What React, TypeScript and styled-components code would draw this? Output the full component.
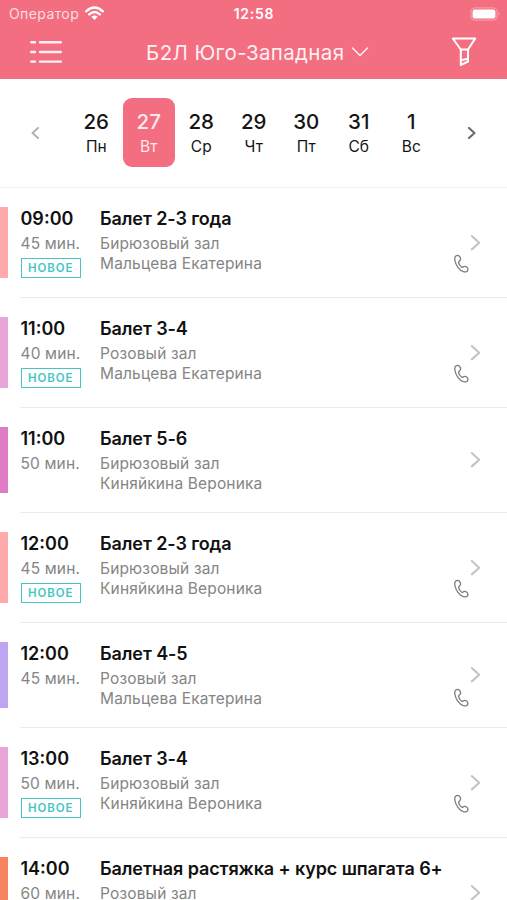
import React from "react";
import styled, { createGlobalStyle } from "styled-components";

const GlobalStyle = createGlobalStyle`
  * { box-sizing: border-box; }
  html, body { margin: 0; background: #fff; }
  body { font-family: Inter, "Noto Sans", sans-serif; color: #111; overflow: hidden; }
`;

const Screen = styled.div`
  width: 507px;
  height: 900px;
  overflow: hidden;
  background: #fff;
`;

const Header = styled.header`
  height: 79px;
  background: #f26e80;
  color: #fff;
`;

const StatusBar = styled.div`
  height: 27px;
  display: grid;
  grid-template-columns: 1fr auto 1fr;
  align-items: center;
  padding: 0 6px 0 9px;
`;

const Carrier = styled.div`
  display: flex;
  align-items: center;
  gap: 6px;
  font-size: 14px;
  letter-spacing: 0.4px;
  color: #fddde1;
`;

const Clock = styled.div`
  font-size: 14px;
  font-weight: 600;
  letter-spacing: 0.75px;
  margin-right: 2px;
`;

const BatterySlot = styled.div`
  display: flex;
  justify-content: flex-end;
`;

const NavBar = styled.div`
  height: 50px;
  display: grid;
  grid-template-columns: 60px 1fr 60px;
  align-items: center;
  padding: 0 13px 0 16px;
`;

const NavIcon = styled.div`
  display: flex;
  justify-content: center;
`;

const Club = styled.div`
  display: flex;
  justify-content: center;
  align-items: center;
  gap: 7px;
  font-size: 20.5px;
  letter-spacing: 0.36px;
  padding-left: 5.5px;
  color: #fff0f2;
  white-space: nowrap;
`;

const Week = styled.section`
  height: 109px;
  display: flex;
  align-items: center;
  padding: 0 0 1px 0.5px;
  border-bottom: 1px solid #efefef;
`;

const Arrow = styled.div`
  width: 70px;
  display: flex;
  justify-content: center;
`;

const Days = styled.div`
  display: flex;
`;

const Day = styled.div<{ $active?: boolean }>`
  width: 52.5px;
  height: 69px;
  padding-top: 11px;
  border-radius: 9px;
  text-align: center;
  background: ${(p) => (p.$active ? "#f26e80" : "transparent")};
  color: ${(p) => (p.$active ? "#ffe9ec" : "#151515")};
`;

const DayNumber = styled.div`
  font-size: 20.5px;
  line-height: 25px;
  font-weight: 500;
`;

const DayName = styled.div`
  font-size: 15.5px;
  line-height: 26px;
`;

const Row = styled.article<{ $height: number }>`
  height: ${(p) => p.$height}px;
  display: flex;
  padding-top: 19px;
`;

const ColorBar = styled.div<{ $color: string; $height: number }>`
  width: 8px;
  height: ${(p) => p.$height}px;
  margin-right: 12px;
  background: ${(p) => p.$color};
`;

const Body = styled.div`
  flex: 1;
  display: flex;
  border-bottom: 1px solid #ebebeb;
  white-space: nowrap;
`;

const TimeColumn = styled.div`
  width: 80px;
  padding-left: 0.5px;
`;

const Info = styled.div`
  flex: 1;
`;

const Strong = styled.div<{ $spacing?: number }>`
  height: 26.5px;
  padding-top: 1px;
  font-size: 18px;
  line-height: 22px;
  font-weight: 600;
  letter-spacing: ${(p) => p.$spacing ?? 0}px;
`;

const Muted = styled.div`
  font-size: 15.5px;
  line-height: 20px;
  letter-spacing: 0.15px;
  color: #858585;
`;

const Badge = styled.div`
  width: 60.5px;
  height: 20px;
  margin-top: 4.5px;
  border: 1.5px solid #45c6c2;
  color: #45c6c2;
  font-size: 11.5px;
  line-height: 18px;
  font-weight: 600;
  letter-spacing: 0.9px;
  text-align: center;
`;

const Actions = styled.div<{ $top: number }>`
  width: 61px;
  display: flex;
  align-items: flex-start;
  padding-top: ${(p) => p.$top}px;
`;

const PhoneSlot = styled.div<{ $drop: number }>`
  width: 24px;
  padding: ${(p) => p.$drop}px 0 0 7px;
`;

const Svg = styled.svg`
  display: block;
  flex-shrink: 0;
  fill: none;
  stroke-linecap: round;
  stroke-linejoin: round;
`;

const Wifi = () => (
  <Svg width="19" height="15" viewBox="0 0 19 15" stroke="#fff" strokeWidth="2.4" strokeLinecap="butt">
    <path d="M1.2 5.3Q9.5-2.3 17.8 5.3M4.2 8.4Q9.5 3.6 14.8 8.4" />
    <path d="M6.4 10.8Q9.5 8 12.6 10.8L9.5 14Z" fill="#fff" stroke="none" />
  </Svg>
);

const Battery = () => (
  <Svg width="31" height="14" viewBox="0 0 31 14">
    <rect x="1" y="0.8" width="26" height="12.4" rx="4" stroke="#f699a6" strokeWidth="1.2" />
    <rect x="2.6" y="2.6" width="22.8" height="8.8" rx="2.2" fill="#fff" />
    <path d="M28.5 5Q31 7 28.5 9Z" fill="#f699a6" />
  </Svg>
);

const Menu = () => (
  <Svg width="34" height="26" viewBox="0 0 34 26" stroke="#fff0f2" strokeWidth="2.4">
    <path d="M2.2 3.2h3.8M11 3.2h20.8M2.2 13h3.8M11 13h20.8M2.2 22.6h3.8M11 22.6h20.8" />
  </Svg>
);

const Filter = () => (
  <Svg width="28" height="32" viewBox="0 0 28 32" stroke="#fff" strokeWidth="2">
    <path d="M2.8 2.5H25.2L18 13.5V25.5L10.8 29V13.5ZM10.8 13.5H18M11.2 24.2L17.6 22.8" />
  </Svg>
);

const Phone = () => (
  <Svg width="17" height="20" viewBox="0 0 17 20" stroke="#7d7d7d" strokeWidth="1.35">
    <path d="M3.6 1.6C1.9 2.2 1.5 4.2 1.9 6.5C2.8 11.3 6.3 16.3 10.4 17.7C12.8 18.4 14.8 17.4 14.9 15.7C14.9 13.9 13.2 12.3 11.6 12.3C10 12.3 9.9 13.9 8.8 13.2C7.5 12.3 5.8 9.8 5.6 8.3C5.5 7.1 7.6 6.9 7.6 5.1C7.6 2.8 5.8 .9 3.6 1.6Z" />
  </Svg>
);

const Chevron = () => (
  <Svg width="12" height="18" viewBox="0 0 12 18" stroke="#c4c4c4" strokeWidth="2.1" strokeLinecap="butt">
    <path d="M1.8 2L9.2 8.7L1.8 15.4" />
  </Svg>
);

const days = [
  ["26", "Пн"], ["27", "Вт"], ["28", "Ср"], ["29", "Чт"], ["30", "Пт"], ["31", "Сб"], ["1", "Вс"],
];

interface Lesson {
  time: string;
  minutes: number;
  title: string;
  hall: string;
  coach?: string;
  color: string;
  fresh?: boolean;
  phone?: boolean;
}

const masha = "Мальцева Екатерина";
const nika = "Киняйкина Вероника";

const lessons: Lesson[] = [
  { time: "09:00", minutes: 45, title: "Балет 2-3 года", hall: "Бирюзовый зал", coach: masha, color: "#ffaaac", fresh: true, phone: true },
  { time: "11:00", minutes: 40, title: "Балет 3-4", hall: "Розовый зал", coach: masha, color: "#e8a5d8", fresh: true, phone: true },
  { time: "11:00", minutes: 50, title: "Балет 5-6", hall: "Бирюзовый зал", coach: nika, color: "#e07cc3" },
  { time: "12:00", minutes: 45, title: "Балет 2-3 года", hall: "Бирюзовый зал", coach: nika, color: "#ffaaac", fresh: true, phone: true },
  { time: "12:00", minutes: 45, title: "Балет 4-5", hall: "Розовый зал", coach: masha, color: "#bda5f2", phone: true },
  { time: "13:00", minutes: 50, title: "Балет 3-4", hall: "Бирюзовый зал", coach: nika, color: "#e8a5d8", fresh: true, phone: true },
];

const lastLesson: Lesson = {
  time: "14:00", minutes: 60, title: "Балетная растяжка + курс шпагата 6+", hall: "Розовый зал", color: "#f5845f",
};

const LessonRow = ({ lesson, tall }: { lesson: Lesson; tall?: boolean }) => {
  const height = tall ? 110 : 105;
  return (
    <Row $height={height}>
      <ColorBar $color={lesson.color} $height={height - 39.5} />
      <Body>
        <TimeColumn>
          <Strong>{lesson.time}</Strong>
          <Muted>{lesson.minutes} мин.</Muted>
          {lesson.fresh && <Badge>НОВОЕ</Badge>}
        </TimeColumn>
        <Info>
          <Strong $spacing={-0.1}>{lesson.title}</Strong>
          <Muted>{lesson.hall}</Muted>
          {lesson.coach && <Muted>{lesson.coach}</Muted>}
        </Info>
        <Actions $top={tall ? 26.5 : 24}>
          <PhoneSlot $drop={tall ? 20 : 22}>{lesson.phone && <Phone />}</PhoneSlot>
          <Chevron />
        </Actions>
      </Body>
    </Row>
  );
};

export default function App() {
  return (
    <Screen>
      <GlobalStyle />
      <Header>
        <StatusBar>
          <Carrier>Оператор <Wifi /></Carrier>
          <Clock>12:58</Clock>
          <BatterySlot><Battery /></BatterySlot>
        </StatusBar>
        <NavBar>
          <NavIcon><Menu /></NavIcon>
          <Club>
            Б2Л Юго-Западная
            <Svg width="18" height="12" viewBox="0 0 18 12" stroke="#fff0f2" strokeWidth="1.5">
              <path d="M1.5 2L9 9.5L16.5 2" />
            </Svg>
          </Club>
          <NavIcon><Filter /></NavIcon>
        </NavBar>
      </Header>
      <Week>
        <Arrow>
          <Svg width="10" height="14" viewBox="0 0 10 14" stroke="#b5b5b5" strokeWidth="2.2">
            <path d="M8 2L2.5 7L8 12" />
          </Svg>
        </Arrow>
        <Days>
          {days.map(([number, name]) => (
            <Day key={number} $active={number === "27"}>
              <DayNumber>{number}</DayNumber>
              <DayName>{name}</DayName>
            </Day>
          ))}
        </Days>
        <Arrow>
          <Svg width="10" height="14" viewBox="0 0 10 14" stroke="#6d6d6d" strokeWidth="2.2">
            <path d="M2 2L7.5 7L2 12" />
          </Svg>
        </Arrow>
      </Week>
      {lessons.map((lesson, i) => (
        <LessonRow key={i} lesson={lesson} tall={lesson.fresh} />
      ))}
      <LessonRow lesson={lastLesson} tall />
    </Screen>
  );
}
